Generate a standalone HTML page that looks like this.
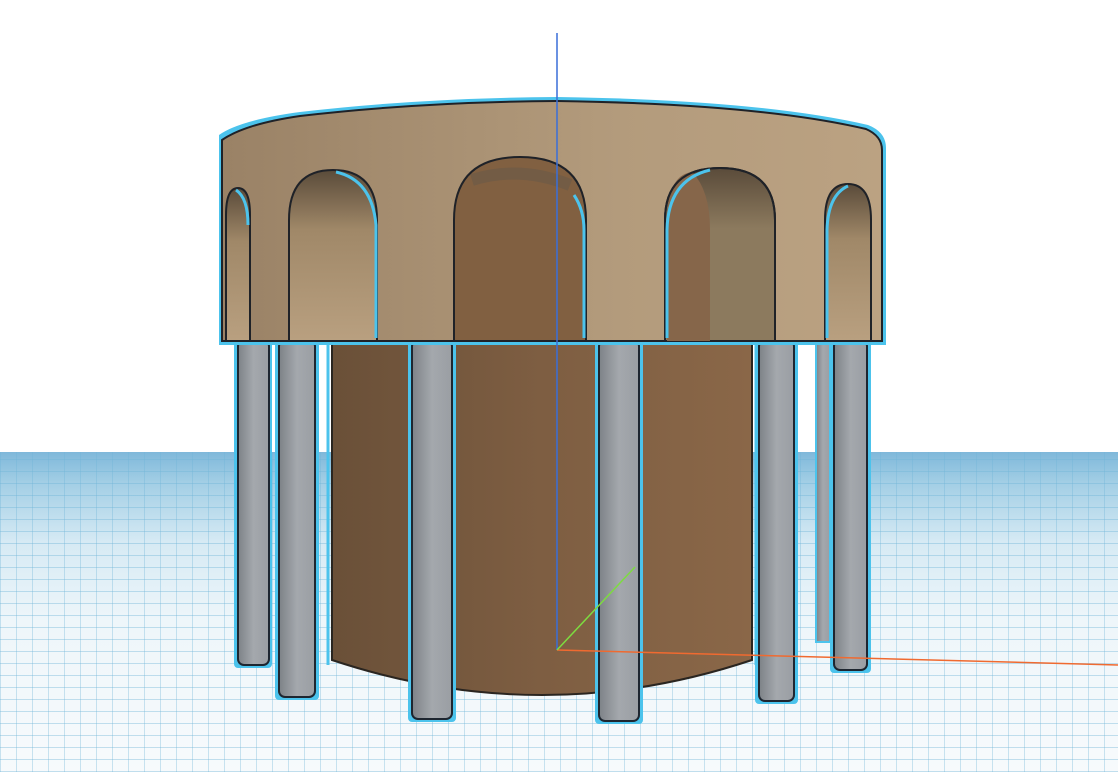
<!DOCTYPE html>
<html><head><meta charset="utf-8"><style>
html,body{margin:0;padding:0;width:1118px;height:772px;overflow:hidden;background:#fff}
#g{position:absolute;left:0;top:452px;width:1118px;height:320px;
background:
repeating-linear-gradient(90deg,rgba(110,180,215,.35) 0 1px,transparent 1px 16px),
repeating-linear-gradient(0deg,rgba(110,180,215,.4) 0 1px,transparent 1px 12px),
linear-gradient(180deg,#7fb8da 0px,#a2cee5 30px,#d6eaf4 90px,#eef6fa 170px,#f7fafc 320px);}
svg{position:absolute;left:0;top:0}
</style></head><body>
<div id="g"></div>
<svg width="1118" height="772" viewBox="0 0 1118 772">
<defs>
<linearGradient id="peg" x1="0" x2="1"><stop offset="0" stop-color="#7d8287"/><stop offset=".5" stop-color="#a4a8ad"/><stop offset="1" stop-color="#9a9ea3"/></linearGradient>
<linearGradient id="cyl" x1="0" x2="1"><stop offset="0" stop-color="#6a5038"/><stop offset=".5" stop-color="#7e5e42"/><stop offset="1" stop-color="#8a6748"/></linearGradient>
<linearGradient id="ring" x1="0" x2="1"><stop offset="0" stop-color="#9a8266"/><stop offset=".6" stop-color="#b39b7c"/><stop offset="1" stop-color="#bba282"/></linearGradient>
<linearGradient id="arch" x1="0" y1="0" x2="0" y2="1"><stop offset="0" stop-color="#5a4b3a"/><stop offset=".35" stop-color="#a08868"/><stop offset="1" stop-color="#b9a080"/></linearGradient>
<linearGradient id="arch2" x1="0" y1="0" x2="0" y2="1"><stop offset="0" stop-color="#5a4b3a"/><stop offset=".35" stop-color="#8c7a5e"/><stop offset="1" stop-color="#8c7a5e"/></linearGradient>
</defs>
<path d="M332 330 V660 Q542 730 752 660 V330 Z" fill="url(#cyl)" stroke="#2a2520" stroke-width="2"/>
<path d="M328 340 V665" stroke="#4cc3ec" stroke-width="3"/>
<path d="M756 340 V665" stroke="#4cc3ec" stroke-width="3"/>
<g stroke-width="2">
<rect x="816" y="344" width="14" height="298" fill="url(#peg)" stroke="#4cc3ec"/>
<rect x="234" y="340" width="38" height="328" rx="4" fill="#4cc3ec"/><rect x="238" y="340" width="31" height="325" rx="6" fill="url(#peg)" stroke="#1e2630"/>
<rect x="275" y="340" width="44" height="360" rx="4" fill="#4cc3ec"/><rect x="279" y="340" width="36" height="357" rx="6" fill="url(#peg)" stroke="#1e2630"/>
<rect x="408" y="340" width="48" height="382" rx="4" fill="#4cc3ec"/><rect x="412" y="340" width="40" height="379" rx="6" fill="url(#peg)" stroke="#1e2630"/>
<rect x="595" y="340" width="48" height="384" rx="4" fill="#4cc3ec"/><rect x="599" y="340" width="40" height="381" rx="6" fill="url(#peg)" stroke="#1e2630"/>
<rect x="755" y="340" width="43" height="364" rx="4" fill="#4cc3ec"/><rect x="759" y="340" width="35" height="361" rx="6" fill="url(#peg)" stroke="#1e2630"/>
<rect x="830" y="340" width="41" height="333" rx="4" fill="#4cc3ec"/><rect x="834" y="340" width="33" height="330" rx="6" fill="url(#peg)" stroke="#1e2630"/>
</g>
<path d="M219 135 Q240 120 300 112 Q420 98 557 97 Q760 100 868 125 Q886 132 886 148 V345 H219 Z" fill="#4cc3ec"/>
<path d="M222 140 Q245 124 300 116 Q420 102 557 101 Q760 104 866 129 Q882 136 882 150 V341 H222 Z" fill="url(#ring)" stroke="#1f2228" stroke-width="2"/>
<g stroke="#1f2228" stroke-width="2">
<path d="M226 341 V215 Q226 188 238 188 Q250 188 250 215 V341 Z" fill="url(#arch)"/>
<path d="M289 341 V220 Q289 170 333 170 Q377 170 377 220 V341 Z" fill="url(#arch)"/>
<path d="M454 341 V220 Q454 157 520 157 Q586 157 586 220 V341 Z" fill="#816041"/>
<path d="M665 341 V220 Q665 168 720 168 Q775 168 775 220 V341 Z" fill="url(#arch2)"/>
<path d="M825 341 V220 Q825 184 848 184 Q871 184 871 220 V341 Z" fill="url(#arch)"/>
</g>
<path d="M472 180 Q520 165 570 185" stroke="#6b5a48" stroke-width="12" fill="none" opacity=".6"/>
<path d="M667 341 V222 Q667 175 692 172 Q710 190 710 230 V341 Z" fill="#86664a"/>
<path d="M665 341 V220 Q665 168 720 168 Q775 168 775 220 V341" stroke="#1f2228" stroke-width="2" fill="none"/>
<g stroke="#4cc3ec" stroke-width="3" fill="none">
<path d="M236 190 Q248 198 248 225"/><path d="M336 172 Q372 180 376 225 V338"/><path d="M574 195 Q584 210 584 230 V338"/>
<path d="M710 170 Q668 180 667 230 V338"/><path d="M848 186 Q828 195 827 230 V338"/>
</g>
<line x1="557" y1="33" x2="557" y2="650" stroke="#3a6fd8" stroke-width="1.5"/>
<line x1="557" y1="650" x2="1118" y2="665" stroke="#f06a30" stroke-width="1.5"/>
<line x1="557" y1="650" x2="635" y2="567" stroke="#7ddc40" stroke-width="1.5"/>
</svg>
</body></html>
